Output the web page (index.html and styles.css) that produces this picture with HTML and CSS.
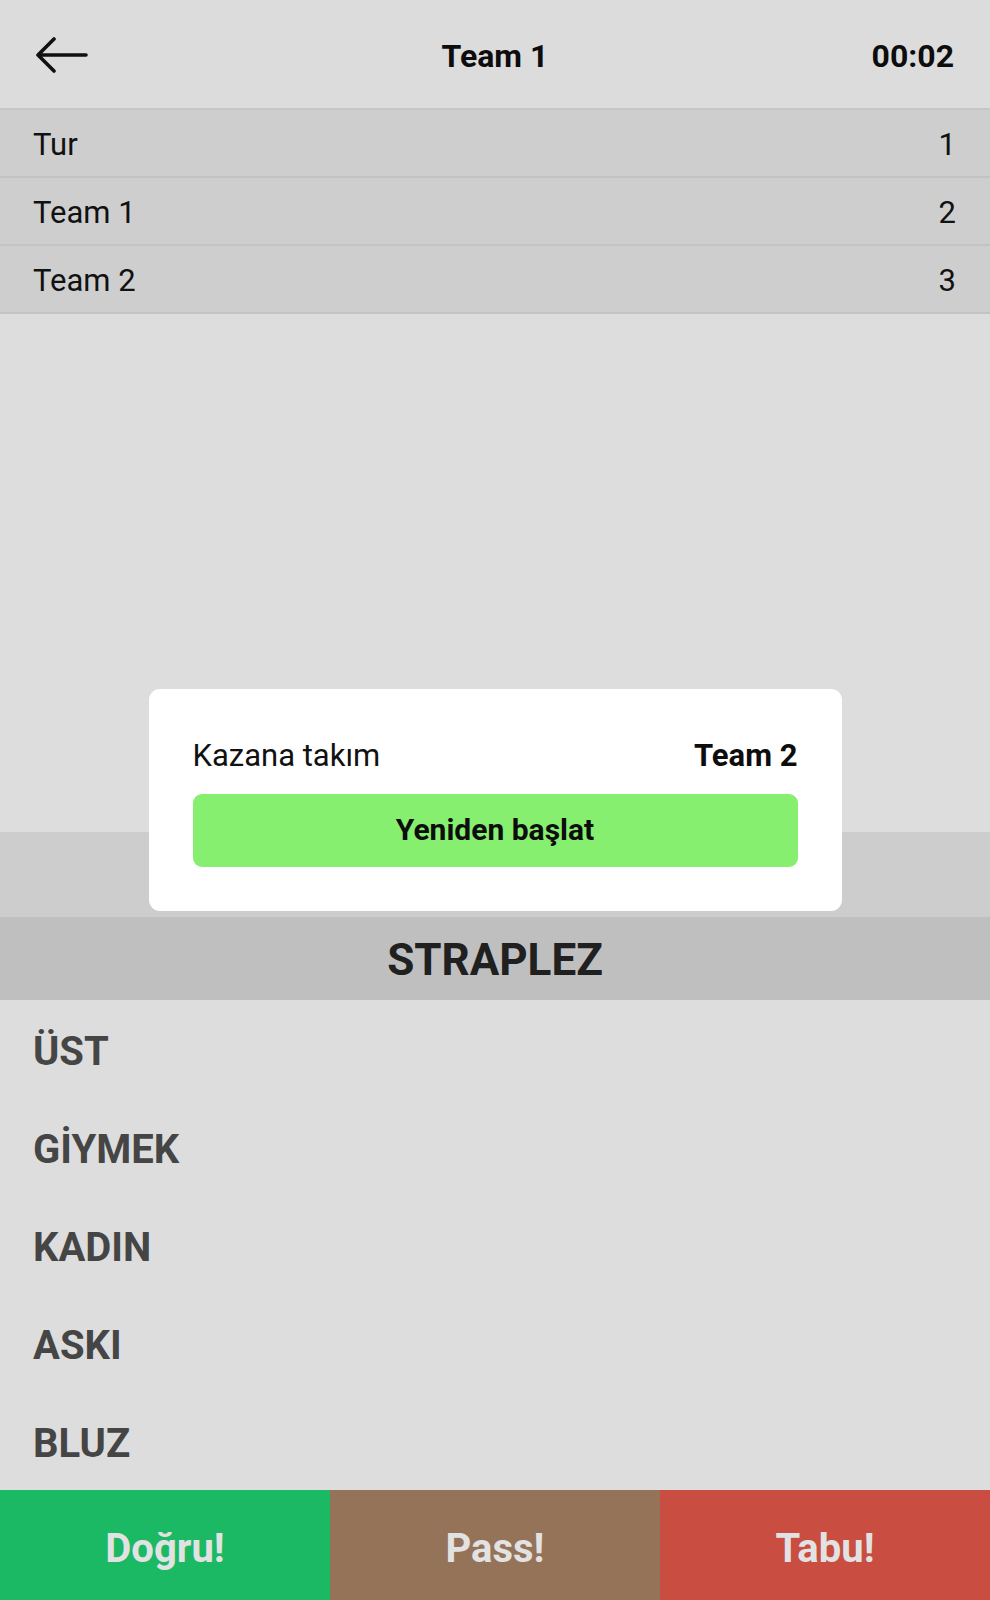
FILE: index.html
```html
<!DOCTYPE html>
<html lang="tr">
<head>
<meta charset="utf-8">
<title>Tabu</title>
<link rel="stylesheet" href="styles.css">
</head>
<body>
<div class="app">
  <header class="topbar">
    <button class="back" aria-label="Geri">
      <svg width="52" height="40" viewBox="0 0 52 40"><path d="M3 19 H50 M18 3 L2 19 L18 35" fill="none" stroke="#111" stroke-width="3.6" stroke-linecap="round" stroke-linejoin="round"/></svg>
    </button>
    <div class="title">Team 1</div>
    <div class="timer">00:02</div>
  </header>
  <div class="scores">
    <div class="score-row"><span>Tur</span><span>1</span></div>
    <div class="score-row"><span>Team 1</span><span>2</span></div>
    <div class="score-row"><span>Team 2</span><span>3</span></div>
  </div>
  <div class="spacer"></div>
  <div class="card-top"></div>
  <div class="word">STRAPLEZ</div>
  <ul class="taboo">
    <li>ÜST</li>
    <li>GİYMEK</li>
    <li>KADIN</li>
    <li>ASKI</li>
    <li>BLUZ</li>
  </ul>
  <div class="actions">
    <button class="act ok">Doğru!</button>
    <button class="act pass">Pass!</button>
    <button class="act taboo-btn">Tabu!</button>
  </div>
</div>
<div class="overlay">
  <div class="dialog">
    <div class="winner"><span>Kazana takım</span><strong>Team 2</strong></div>
    <button class="restart">Yeniden başlat</button>
  </div>
</div>
</body>
</html>
```
FILE: styles.css
```css
* { box-sizing: border-box; }
html, body { margin: 0; padding: 0; }
body {
  font-family: Roboto, "Noto Sans", "Liberation Sans", sans-serif;
  background: #dddddd;
  color: #111;
}
button { font-family: inherit; border: 0; padding: 0; margin: 0; cursor: pointer; }
.app {
  display: flex;
  flex-direction: column;
  height: 1600px;
  width: 990px;
}
.topbar {
  height: 110px;
  flex: none;
  display: flex;
  align-items: center;
  justify-content: space-between;
  padding: 4px 36px 0 34px;
  background: #dcdcdc;
  border-bottom: 2px solid #c6c6c6;
  position: relative;
}
.back {
  background: transparent;
  width: 52px;
  height: 40px;
  display: flex;
  margin-left: 2px;
}
.title {
  position: absolute;
  left: 0;
  right: 0;
  top: 0;
  bottom: 0;
  display: flex;
  align-items: center;
  justify-content: center;
  padding-top: 4px;
  font-weight: 700;
  font-size: 32px;
  pointer-events: none;
  color: #0d0d0d;
}
.timer {
  font-weight: 700;
  font-size: 32px;
  color: #0d0d0d;
}
.scores { flex: none; }
.score-row {
  height: 68px;
  display: flex;
  align-items: center;
  justify-content: space-between;
  padding: 2px 34px 0 33px;
  background: #cecece;
  border-bottom: 2px solid #c3c3c3;
  font-size: 31px;
  color: #111;
}
.spacer { flex: 1; }
.card-top {
  height: 85px;
  flex: none;
  background: #cdcdcd;
}
.word {
  height: 83px;
  flex: none;
  display: flex;
  align-items: center;
  justify-content: center;
  padding-top: 2px;
  background: #bfbfbf;
  font-weight: 700;
  font-size: 44px;
  color: #202020;
}
.taboo {
  list-style: none;
  margin: 0;
  padding: 0;
  flex: none;
}
.taboo li {
  height: 98px;
  display: flex;
  align-items: center;
  padding: 4px 0 0 33px;
  font-weight: 700;
  font-size: 40px;
  color: #454545;
}
.actions {
  height: 110px;
  flex: none;
  display: grid;
  grid-template-columns: 1fr 1fr 1fr;
}
.act {
  font-weight: 700;
  font-size: 40px;
  color: #e2e2e2;
  padding-top: 6px;
}
.ok { background: #1bb964; }
.pass { background: #947359; }
.taboo-btn { background: #c94d41; }
.overlay {
  position: fixed;
  inset: 0;
  display: flex;
  align-items: center;
  justify-content: center;
}
.dialog {
  width: 693px;
  height: 222px;
  background: #ffffff;
  border-radius: 11px;
  padding: 44px 44px 44px 44px;
  display: flex;
  flex-direction: column;
  justify-content: flex-end;
  gap: 20px;
}
.winner {
  display: flex;
  justify-content: space-between;
  align-items: center;
  font-size: 31px;
  color: #111;
}
.winner strong { font-weight: 700; color: #0d0d0d; }
.restart {
  height: 73px;
  width: 100%;
  background: #86ef6f;
  border-radius: 9px;
  font-weight: 700;
  font-size: 30px;
  color: #0d0d0d;
  padding-bottom: 2px;
}
```
